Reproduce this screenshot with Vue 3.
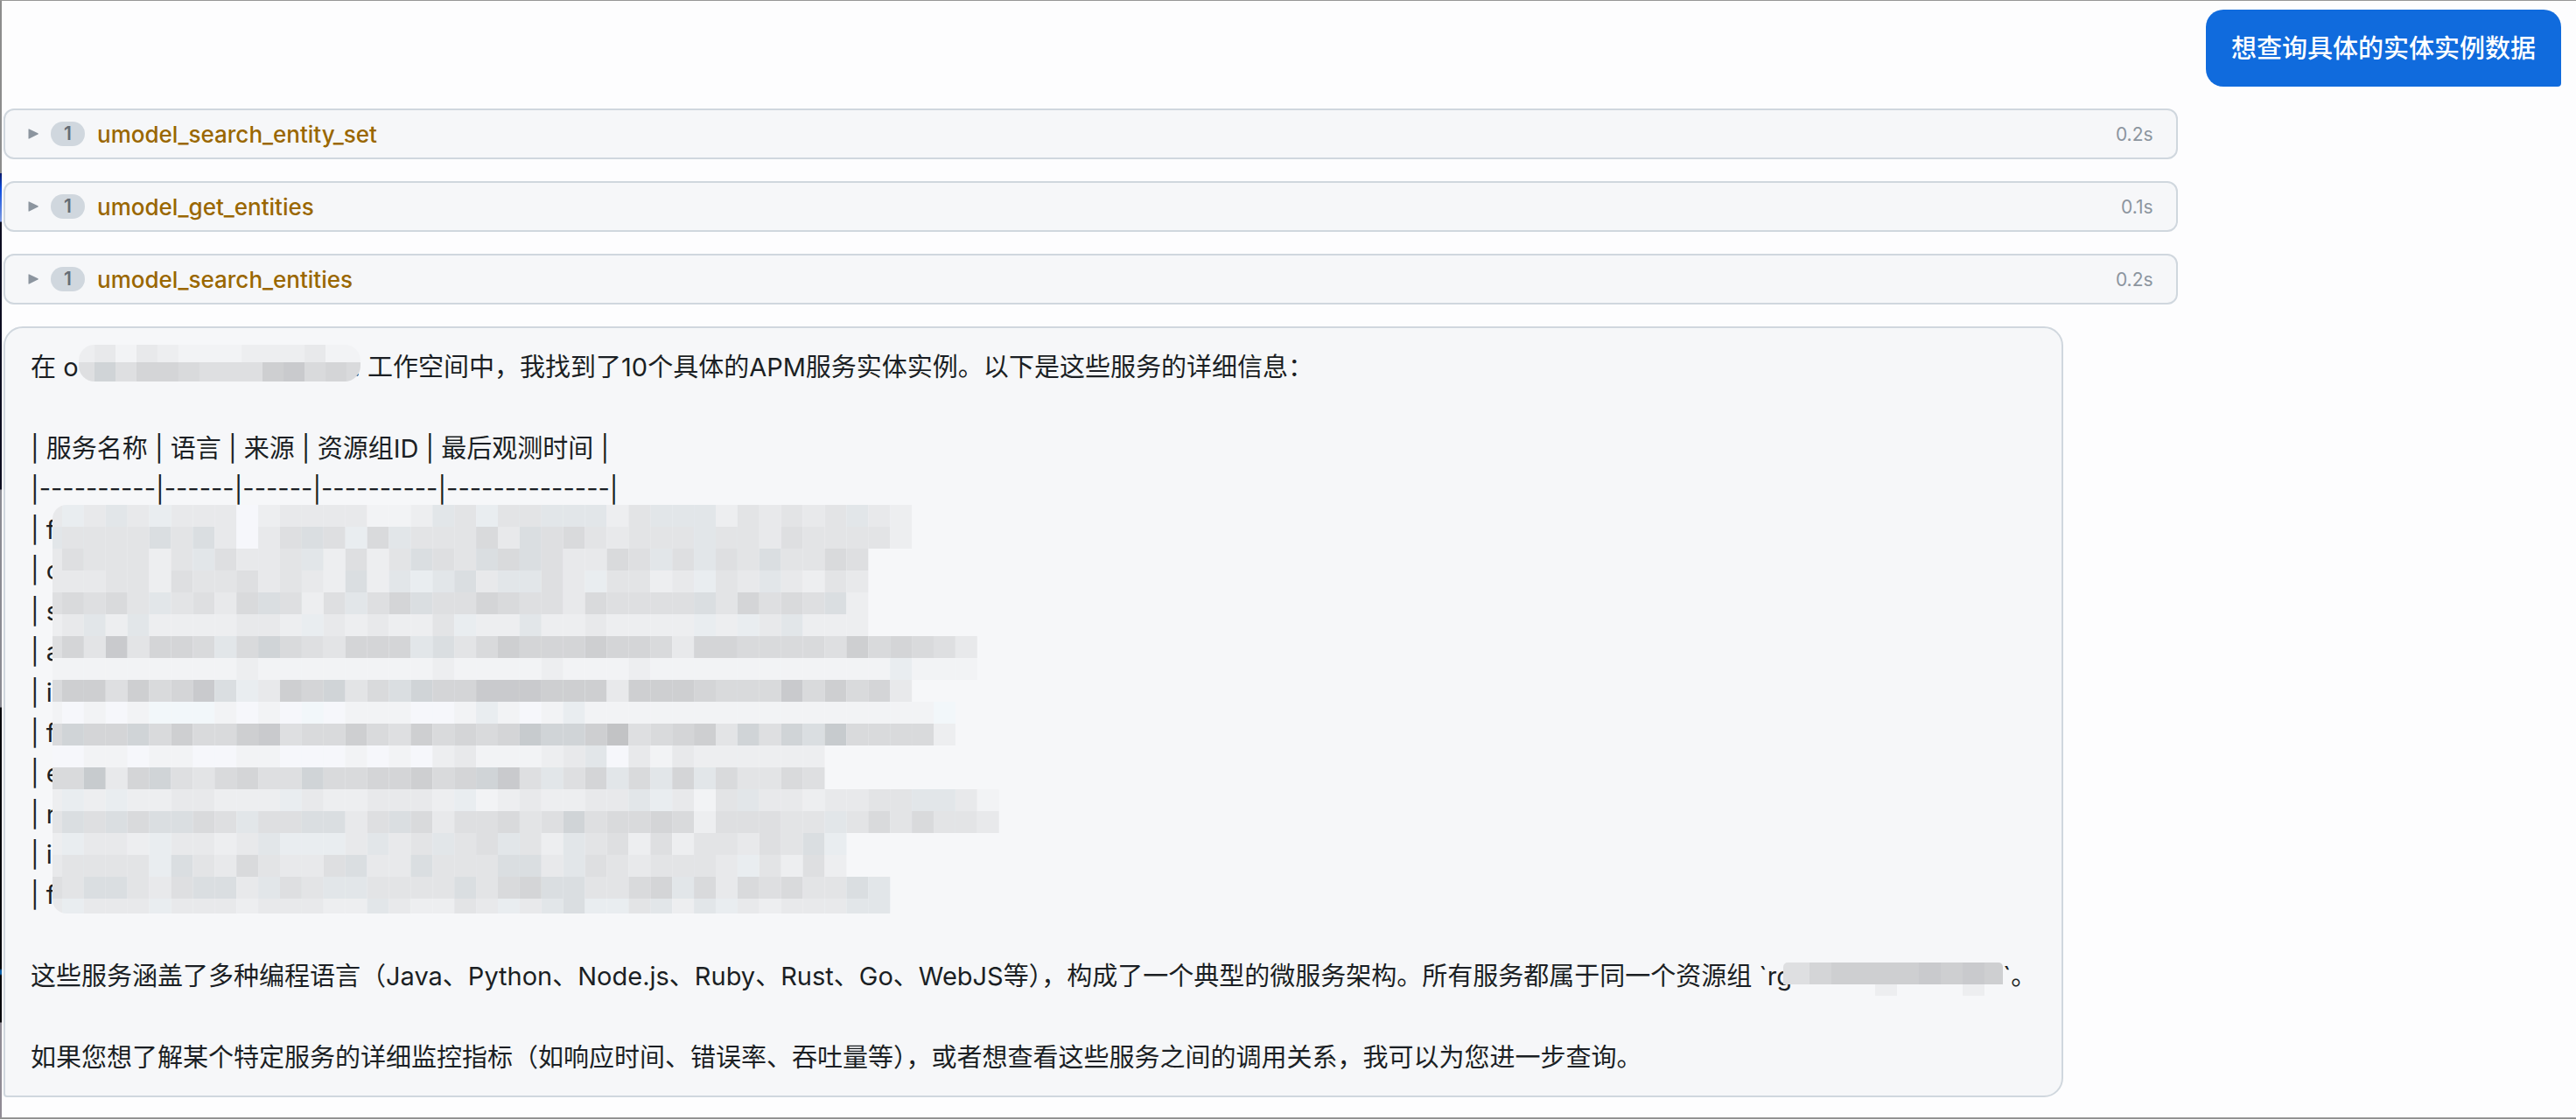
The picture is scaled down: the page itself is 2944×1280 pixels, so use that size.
<template>
  <div class="chat">
    <div class="edge"></div>

    <div class="message user">{{ question }}</div>

    <button v-for="call in toolCalls" :key="call.name" type="button" class="tool-call">
      <svg class="arrow" viewBox="0 0 12 12" aria-hidden="true">
        <path d="M0.5 0.9 Q0.5 0 1.4 0.4 L11.4 5.2 Q12.4 6 11.4 6.6 L1.4 11.6 Q0.5 12 0.5 11.1 Z" />
      </svg>
      <span class="count">{{ call.count }}</span>
      <span class="name">{{ call.name }}</span>
      <span class="time">{{ call.time }}</span>
    </button>

    <div class="message assistant">
      <p>
        在 o<svg class="mask mask-workspace" viewBox="0 0 322 42" aria-hidden="true">
          <rect v-for="(c, i) in workspaceCells" :key="i" v-bind="c" />
        </svg>. 工作空间中，我找到了10个具体的APM服务实体实例。以下是这些服务的详细信息：
      </p>
      <p>&nbsp;</p>
      <p>| 服务名称 | 语言 | 来源 | 资源组ID | 最后观测时间 |</p>
      <p>|----------|------|------|----------|--------------|</p>
      <div class="rows">
        <p v-for="(row, i) in rows" :key="i">| {{ row }}</p>
        <svg class="mask-rows" viewBox="0 0 1082 467" aria-hidden="true">
          <rect v-for="(c, i) in rowCells" :key="i" v-bind="c" />
        </svg>
      </div>
      <p>&nbsp;</p>
      <p>
        这些服务涵盖了多种编程语言（Java、Python、Node.js、Ruby、Rust、Go、WebJS等），构成了一个典型的微服务架构。所有服务都属于同一个资源组 `rg<svg class="mask mask-group" viewBox="0 0 251 38" aria-hidden="true">
          <rect v-for="(c, i) in groupCells" :key="i" v-bind="c" />
        </svg>`。
      </p>
      <p>&nbsp;</p>
      <p>如果您想了解某个特定服务的详细监控指标（如响应时间、错误率、吞吐量等），或者想查看这些服务之间的调用关系，我可以为您进一步查询。</p>
    </div>
  </div>
</template>

<script setup>
const question = '想查询具体的实体实例数据';

const toolCalls = [
  { name: 'umodel_search_entity_set', count: 1, time: '0.2s' },
  { name: 'umodel_get_entities', count: 1, time: '0.1s' },
  { name: 'umodel_search_entities', count: 1, time: '0.2s' }
];

const rows = ['f', 'c', 's', 'a', 'in', 'f', 'e', 'r', 'in', 'f'];

// shades of the redaction mosaic, light to dark, then the bluish ones
const shades = {
  0: '#f6f7fb',
  1: '#f2f3f5',
  2: '#edeef0',
  3: '#e8e9eb',
  4: '#e3e4e6',
  5: '#dedfe1',
  6: '#d9dadc',
  7: '#d4d5d7',
  8: '#cecfd1',
  9: '#c9cacd',
  a: '#c2c3c5',
  z: '#f2f7fa',
  p: '#e9edf0',
  q: '#e2e6e9',
  r: '#dadee1',
  s: '#d0d4d7',
  t: '#c7cbce'
};

// one character per cell, dots are left empty, spaces only group the cells
const mosaic = (lines, first, cell, heights) => {
  const cells = [];
  let y = 0;
  lines.forEach((line, r) => {
    [...line.replaceAll(' ', '')].forEach((shade, c) => {
      if (shade === '.') return;
      cells.push({
        x: c === 0 ? 0 : first + (c - 1) * cell,
        y,
        width: c === 0 ? first : cell,
        height: heights[r],
        fill: shades[shade]
      });
    });
    y += heights[r];
  });
  return cells;
};

const rowLines = [
  '3p3q3p3330 233331 12q4p4 4qqq24qqq2 43434q32',
  'q4444r4r30 35r5p6 q44463 r5643444q4 43544442',
  '3544424q53 34q252 4r54r6 r53365q5q5 4r4465',
  '3334425445 3432r2 qpqr3q q53p4423p4 3q3243',
  '56564q4536 r525q5 7r5576 55365555r4 7565r2',
  '23q2q22223 32p323 224p22 q2232222p2 p3q222',
  '5749477 6q6 s65477 7qr468 7778776377 66665867653',
  '1111111112 111111 112111 1211121111 1111111p111',
  '68858679rp 387s46 rs7799 9888388876 66968673',
  '10101zzz10 10z011 1001p1 01p1111111 111111111z',
  '6s77s68668 956686 586767 tss8a56784 s5srt66662',
  '0011011001 100010 102311 123q031322 2222',
  '66t37s5467 55s667 7867s9 5q57q6q7q6 4465',
  '2p2p223322 2p3223 332p12 32233qp314 q3323344qq31',
  '4r5r6rr65q 55rr35 r63556 45s5667625 5544q4646443',
  '2p332p3323 qppp3q 34q45q 42q4525244 354rp',
  '34444pr436 4335r3 3r444r r3q5434443 p4252',
  '54rr435rr3 q54qq4 444r46 7rr4467q63 65644rq',
  '3p333p3332 33322q 32243p 3qrpp4q2qp 32333qq'
];

const rowCells = mosaic(rowLines, 11, 24.9, [...Array(18).fill(25), 17]);

const workspaceCells = mosaic(['23132111222311', '5s577655589676'], 18, 24, [20, 22]);

const groupCells = mosaic(['5788889898', '....2...2.'], 30, 25, [25, 13]);
</script>

<style>
body {
  margin: 0;
  background: #fdfdfe;
}
</style>

<style scoped>
.chat {
  position: relative;
  display: flex;
  flex-direction: column;
  align-items: flex-start;
  gap: 25px;
  padding: 10px 17px 23px 4px;
  border-top: 1px solid #979797;
  border-bottom: 2px solid #929292;
  font-family: Inter, "Noto Sans CJK SC", sans-serif;
  font-size: 29px;
  line-height: 1.6;
  color: #1b1f24;
}

/* sliver of the window behind the page */
.edge {
  position: absolute;
  top: 0;
  bottom: 0;
  left: 0;
  width: 2px;
  background: linear-gradient(
    #8c8c8c 0 197px,
    #0a1a6a 197px,
    #0a4be0 215px,
    #7f9be0 252px,
    #0c0c20 253px 558px,
    #8a8a92 559px 807px,
    #05050a 808px 1106px,
    #0a5fa8 1108px 1112px,
    #05050a 1114px 1167px,
    #8f8a94 1168px
  );
}

.message {
  padding: 22px 29px 20px;
}

.user {
  align-self: flex-end;
  background: #106bdd;
  color: white;
  font-weight: 500;
  border-radius: 20px 20px 4px 20px;
}

.assistant {
  box-sizing: border-box;
  max-width: 85%;
  background: #f6f7f9;
  border: 2px solid #d0d7de;
  border-radius: 22px 22px 22px 4px;
}

.assistant p {
  margin: 0;
}

.tool-call {
  box-sizing: border-box;
  width: 85%;
  height: 58px;
  display: flex;
  align-items: center;
  gap: 14px;
  padding: 0 26px;
  background: #f6f7f9;
  border: 2px solid #d0d7de;
  border-radius: 12px;
  font-family: inherit;
  text-align: left;
  cursor: pointer;
}

.arrow {
  width: 12px;
  height: 12px;
  fill: #8c959f;
}

.count {
  width: 39px;
  height: 28px;
  border-radius: 14px;
  background: #d0d7de;
  color: #656d76;
  font-size: 21px;
  font-weight: 600;
  line-height: 28px;
  text-align: center;
}

.name {
  color: #9a6700;
  font-size: 26px;
  font-weight: 500;
}

.time {
  margin-left: auto;
  color: #8c959f;
  font-size: 21px;
}

.mask {
  position: relative;
  vertical-align: baseline;
}

.mask-workspace {
  width: 322px;
  height: 42px;
  margin: -6px -8px -6px 0;
  border-radius: 18px;
}

.mask-group {
  width: 251px;
  height: 38px;
  margin: 0 0 -12px -10px;
  border-radius: 5px;
}

.rows {
  position: relative;
}

.mask-rows {
  position: absolute;
  top: -6px;
  left: 25px;
  width: 1082px;
  height: 467px;
  border-radius: 16px;
}
</style>
